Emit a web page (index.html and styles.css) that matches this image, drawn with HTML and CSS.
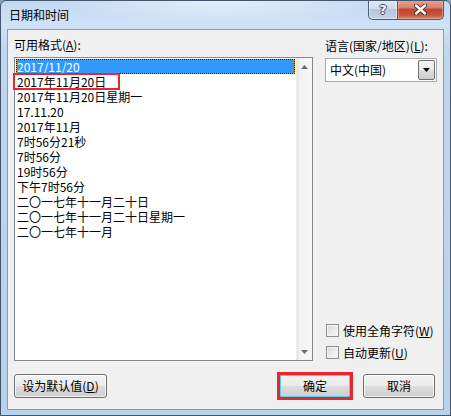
FILE: index.html
```html
<!DOCTYPE html>
<html lang="zh-CN">
<head>
<meta charset="utf-8">
<title>日期和时间</title>
<link rel="stylesheet" href="styles.css">
</head>
<body>
<div class="window">
  <div class="titlebar">
    <div class="title">日期和时间</div>
    <div class="caption-btns">
      <div class="cap help"><span class="qmark">?</span></div>
      <div class="cap close">
        <svg width="13" height="11" viewBox="0 0 13 11">
          <path d="M2 1.5 L11 9.5 M11 1.5 L2 9.5" stroke="#3b2a2a" stroke-width="4.2" stroke-linecap="round"/>
          <path d="M2 1.5 L11 9.5 M11 1.5 L2 9.5" stroke="#ffffff" stroke-width="2.4" stroke-linecap="round"/>
        </svg>
      </div>
    </div>
  </div>
  <div class="client">
    <div class="main">
      <div class="col-left">
        <div class="label">可用格式(<u>A</u>):</div>
        <div class="listbox">
          <div class="items">
            <div class="item sel">2017/11/20</div>
            <div class="item marked">2017年11月20日<span class="mark"></span></div>
            <div class="item">2017年11月20日星期一</div>
            <div class="item">17.11.20</div>
            <div class="item">2017年11月</div>
            <div class="item">7时56分21秒</div>
            <div class="item">7时56分</div>
            <div class="item">19时56分</div>
            <div class="item">下午7时56分</div>
            <div class="item">二〇一七年十一月二十日</div>
            <div class="item">二〇一七年十一月二十日星期一</div>
            <div class="item">二〇一七年十一月</div>
          </div>
          <div class="vscroll">
            <div class="sb-btn">
              <svg width="7" height="4" viewBox="0 0 7 4"><path d="M0 4 L3.5 0 L7 4 Z" fill="#6d6d6d"/></svg>
            </div>
            <div class="sb-track"></div>
            <div class="sb-btn">
              <svg width="7" height="4" viewBox="0 0 7 4"><path d="M0 0 L7 0 L3.5 4 Z" fill="#6d6d6d"/></svg>
            </div>
          </div>
        </div>
      </div>
      <div class="col-right">
        <div class="label">语言(国家/地区)(<u>L</u>):</div>
        <div class="combo">
          <span class="combo-text">中文(中国)</span>
          <div class="combo-btn">
            <svg width="7" height="4" viewBox="0 0 7 4"><path d="M0 0 L7 0 L3.5 4 Z" fill="#000"/></svg>
          </div>
        </div>
        <div class="checks">
          <div class="check"><span class="box"></span><span>使用全角字符(<u>W</u>)</span></div>
          <div class="check"><span class="box"></span><span>自动更新(<u>U</u>)</span></div>
        </div>
      </div>
    </div>
    <div class="footer">
      <div class="btn btn-default">设为默认值(<u>D</u>)</div>
      <div class="spacer"></div>
      <div class="btn btn-ok">确定</div>
      <div class="btn btn-cancel">取消</div>
    </div>
  </div>
</div>
</body>
</html>
```
FILE: styles.css
```css
* { box-sizing: border-box; }
html, body { margin: 0; padding: 0; background: #8fa3b8; }
body {
  font-family: "Noto Sans CJK SC", "Noto Sans", sans-serif;
  font-size: 12px;
  color: #000;
}
u { text-decoration: underline; text-underline-offset: 1px; }

.window {
  width: 451px;
  height: 416px;
  border: 1px solid #44566b;
  border-radius: 6px 6px 0 0;
  background:
    radial-gradient(ellipse 160px 22px at 220px 0px, rgba(255,255,255,0.55), rgba(255,255,255,0) 100%),
    linear-gradient(180deg, #c2daf3 0%, #cfe2f6 6%, #bed6ef 12%, #b9d2ec 100%);
  display: flex;
  flex-direction: column;
  overflow: hidden;
}

.titlebar {
  height: 28px;
  flex: none;
  display: flex;
  align-items: flex-start;
}
.title {
  padding-left: 8px;
  line-height: 28px;
  font-size: 12px;
  color: #000;
}
.caption-btns {
  margin-left: auto;
  margin-right: 6px;
  margin-top: -1px;
  display: flex;
}
.cap {
  height: 20px;
  border: 1px solid #4a5b70;
  border-top: none;
  display: flex;
  align-items: center;
  justify-content: center;
}
.help {
  width: 29px;
  border-right: none;
  border-radius: 0 0 0 5px;
  background: linear-gradient(180deg, #e2ebf5 0%, #cfdcea 45%, #b4c6da 50%, #c3d4e6 100%);
  box-shadow: inset 0 0 0 1px rgba(255,255,255,0.45);
}
.qmark {
  font-family: "DejaVu Sans", sans-serif;
  font-weight: bold;
  font-size: 13px;
  line-height: 14px;
  color: #fff;
  text-shadow: 1px 0 0 #3c4a5c, -1px 0 0 #3c4a5c, 0 1px 0 #3c4a5c, 0 -1px 0 #3c4a5c;
}
.close {
  width: 47px;
  border-radius: 0 0 5px 0;
  background: linear-gradient(180deg, #e8a493 0%, #d9806d 40%, #c4442f 50%, #c85540 80%, #d98a70 100%);
  box-shadow: inset 0 0 0 1px rgba(255,210,200,0.4);
}

.client {
  flex: none;
  height: 381px;
  margin: 0 6px 5px 6px;
  border: 1px solid #8a9bb0;
  background: #f0f0f0;
  display: flex;
  flex-direction: column;
}

.main {
  display: flex;
  gap: 12px;
  padding: 7px 6px 0 6px;
}
.label {
  line-height: 16px;
  height: 16px;
  margin-bottom: 4px;
  white-space: nowrap;
}
.col-left { width: 299px; flex: none; }
.col-right {
  width: 112px;
  flex: none;
  display: flex;
  flex-direction: column;
  padding-top: 1px;
}

.listbox {
  height: 304px;
  border: 1px solid #828790;
  background: #fff;
  display: flex;
}
.items {
  flex: 1;
  padding: 1px;
}
.item {
  position: relative;
  height: 15px;
  line-height: 15px;
  padding-left: 1px;
  white-space: nowrap;
}
.item.sel {
  background: #3399ff;
  color: #fff;
  box-shadow: inset 0 0 0 1px #e8962a;
  outline: 1px dotted #141414;
  outline-offset: -1px;
}
.mark {
  position: absolute;
  left: -3px;
  top: -1px;
  width: 107px;
  height: 17px;
  border: 2px solid #e8262b;
}

.vscroll {
  width: 16px;
  flex: none;
  display: flex;
  flex-direction: column;
  background: linear-gradient(90deg, #e4e4e4 0%, #f3f3f3 20%, #f6f6f6 100%);
  border-left: 1px solid #ececec;
}
.sb-btn {
  height: 17px;
  display: flex;
  align-items: center;
  justify-content: center;
}
.sb-track { flex: 1; }

.combo {
  height: 24px;
  border: 1px solid #a5acb5;
  background: #fff;
  display: flex;
  align-items: center;
  padding: 1px;
}
.combo-text {
  flex: 1;
  padding-left: 3px;
  line-height: 20px;
}
.combo-btn {
  width: 17px;
  height: 20px;
  border: 1px solid #707070;
  border-radius: 2px;
  background: linear-gradient(180deg, #f2f2f2 0%, #ebebeb 50%, #dddddd 51%, #cfcfcf 100%);
  display: flex;
  align-items: center;
  justify-content: center;
}

.checks {
  margin-top: auto;
  margin-bottom: -2px;
}
.check {
  height: 22px;
  display: flex;
  align-items: center;
  padding-left: 1px;
  white-space: nowrap;
}
.box {
  width: 13px;
  height: 13px;
  border: 1px solid #8e8f8f;
  background: linear-gradient(135deg, #d6d6d6 0%, #eeeeee 60%, #fbfbfb 100%);
  box-shadow: inset 0 0 0 1px #f4f4f4;
  margin-right: 4px;
  flex: none;
}

.footer {
  display: flex;
  align-items: flex-start;
  padding: 13px 8px 0 6px;
}
.spacer { flex: 1; }
.btn {
  height: 24px;
  border: 1px solid #707070;
  border-radius: 3px;
  background: linear-gradient(180deg, #f2f2f2 0%, #ebebeb 48%, #dddddd 50%, #cfcfcf 100%);
  box-shadow: inset 0 0 0 1px rgba(255,255,255,0.7);
  display: flex;
  align-items: center;
  justify-content: center;
  line-height: 16px;
  white-space: nowrap;
}
.btn-default { width: 93px; }
.btn-ok {
  position: relative;
  width: 72px;
  border-color: #3c7fb1;
  box-shadow: inset 0 0 0 1px #48d8f8;
}
.btn-ok::after {
  content: "";
  position: absolute;
  left: -3px;
  top: -3px;
  right: -3px;
  bottom: -3px;
  border: 3px solid #e8262b;
}
.btn-cancel {
  width: 72px;
  margin-left: 12px;
}
```
